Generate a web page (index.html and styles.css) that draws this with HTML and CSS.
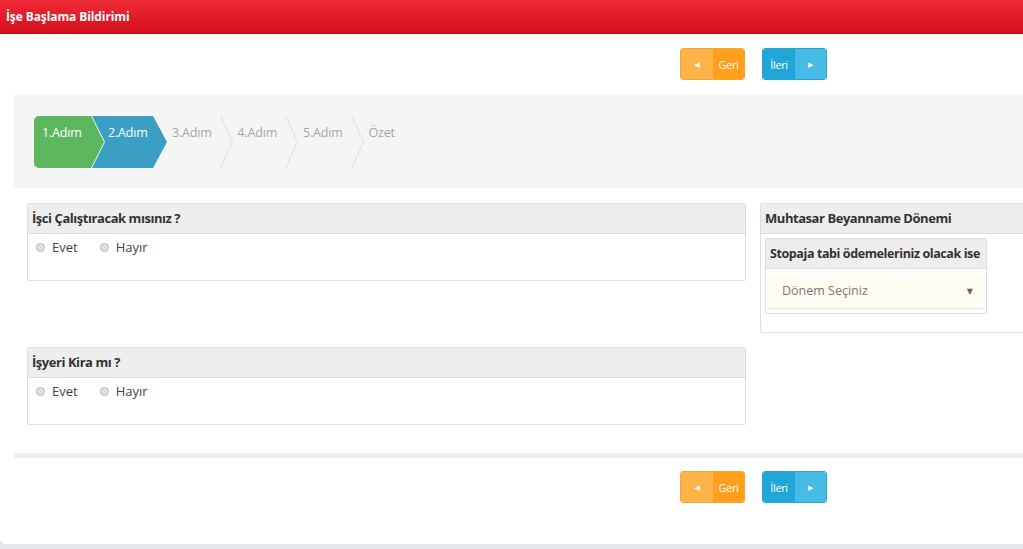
FILE: index.html
```html
<!DOCTYPE HTML>
<html>
<head>
    <meta charset="utf-8" />
    <title>İşe Başlama Bildirimi</title>
    <link rel="stylesheet" href="styles.css">
</head>
<body>

<div class="topbar">İşe Başlama Bildirimi</div>

<div class="page">
    <div class="nav-buttons">
        <a class="btn btn-back"><span class="btn-icon">&#9664;</span><span class="btn-text">Geri</span></a>
        <a class="btn btn-next"><span class="btn-text">İleri</span><span class="btn-icon">&#9654;</span></a>
    </div>

    <div class="wizard">
        <div class="step step-done">1.Adım</div>
        <div class="step step-active">2.Adım</div>
        <div class="step step-todo">3.Adım<svg class="sep" width="13" height="52" viewBox="0 0 13 52"><polyline points="0.5,0 12.5,26 0.5,52" /></svg></div>
        <div class="step step-todo">4.Adım<svg class="sep" width="13" height="52" viewBox="0 0 13 52"><polyline points="0.5,0 12.5,26 0.5,52" /></svg></div>
        <div class="step step-todo">5.Adım<svg class="sep" width="13" height="52" viewBox="0 0 13 52"><polyline points="0.5,0 12.5,26 0.5,52" /></svg></div>
        <div class="step step-todo">Özet</div>
    </div>

    <div class="columns">
        <div class="col-left">
            <div class="panel">
                <div class="panel-head">İşci Çalıştıracak mısınız ?</div>
                <div class="panel-body">
                    <label class="radio"><span class="dot"></span>Evet</label>
                    <label class="radio"><span class="dot"></span>Hayır</label>
                </div>
            </div>
            <div class="panel panel-second">
                <div class="panel-head">İşyeri Kira mı ?</div>
                <div class="panel-body">
                    <label class="radio"><span class="dot"></span>Evet</label>
                    <label class="radio"><span class="dot"></span>Hayır</label>
                </div>
            </div>
        </div>
        <div class="col-right">
            <div class="panel panel-side">
                <div class="panel-head">Muhtasar Beyanname Dönemi</div>
                <div class="panel-body side-body">
                    <div class="panel panel-inner">
                        <div class="panel-head">Stopaja tabi ödemeleriniz olacak ise</div>
                        <div class="select-wrap">
                            <div class="select">Dönem Seçiniz<span class="caret">&#9660;</span></div>
                        </div>
                    </div>
                </div>
            </div>
        </div>
    </div>

    <div class="divider"></div>

    <div class="nav-buttons nav-bottom">
        <a class="btn btn-back"><span class="btn-icon">&#9664;</span><span class="btn-text">Geri</span></a>
        <a class="btn btn-next"><span class="btn-text">İleri</span><span class="btn-icon">&#9654;</span></a>
    </div>
</div>

</body>
</html>
```

FILE: styles.css
```css
html, body {
    margin: 0;
    overflow: hidden;
}
body {
    font-family: "Open Sans", "DejaVu Sans", sans-serif;
    font-size: 12px;
    color: #333;
    background: #e3e7ea;
    height: 549px;
}
.topbar {
    height: 34px;
    line-height: 34px;
    padding-left: 6px;
    color: #fff;
    font-weight: bold;
    font-size: 12px;
    letter-spacing: -0.1px;
    background: linear-gradient(#ee2a36, #d4101c);
    border-bottom: 1px solid #b80d17;
    box-sizing: border-box;
}
.page {
    background: #fff;
    height: 510px;
    border-bottom-left-radius: 6px;
    padding-top: 14px;
    box-sizing: border-box;
    width: 1100px;
}
.nav-buttons {
    display: flex;
    gap: 17px;
    padding-left: 680px;
    height: 32px;
}
.btn {
    display: flex;
    width: 65px;
    height: 32px;
    border-radius: 3px;
    overflow: hidden;
    color: #fff;
    font-size: 11px;
    letter-spacing: -0.4px;
    box-sizing: border-box;
}
.btn span {
    display: flex;
    align-items: center;
    justify-content: center;
}
.btn-back {
    border: 1px solid #f5a53a;
}
.btn-back .btn-icon {
    width: 32px;
    background: #ffb449;
    font-size: 7px;
}
.btn-back .btn-text {
    flex: 1;
    background: #ff9f1c;
}
.btn-next {
    border: 1px solid #2aa3cf;
}
.btn-next .btn-text {
    width: 32px;
    background: #20a6d8;
}
.btn-next .btn-icon {
    flex: 1;
    background: #46bbe6;
    font-size: 7px;
}
.wizard {
    margin: 15px 0 0 14px;
    height: 93px;
    background: #f5f5f5;
    display: flex;
    align-items: flex-start;
    padding: 21px 0 0 20px;
    box-sizing: border-box;
}
.step {
    height: 52px;
    font-size: 12.5px;
    letter-spacing: -0.2px;
    line-height: 33px;
    display: flex;
    align-items: flex-start;
}
.step-done {
    width: 70px;
    padding-left: 8px;
    box-sizing: border-box;
    color: #fff;
    background: #5db75e;
    border-radius: 5px 0 0 5px;
    clip-path: polygon(0 0, 57px 0, 70px 50%, 57px 100%, 0 100%);
}
.step-active {
    width: 76px;
    margin-left: -13px;
    padding-left: 17px;
    box-sizing: border-box;
    color: #fff;
    background: #3b9fc5;
    clip-path: polygon(1px 0, 62px 0, 76px 50%, 62px 100%, 1px 100%, 14px 50%);
}
.step-todo {
    color: #a5a5a5;
    padding-left: 5px;
}
.step-todo .sep {
    margin-left: 8px;
}
.sep polyline {
    fill: none;
    stroke: #e0e0e0;
    stroke-width: 1;
}
.columns {
    display: flex;
    margin-top: 15px;
    padding-left: 27px;
    gap: 14px;
}
.col-left {
    width: 719px;
}
.col-right {
    width: 290px;
}
.panel {
    border: 1px solid #dddddd;
    border-radius: 2px;
    background: #fff;
}
.panel-head {
    height: 29px;
    line-height: 29px;
    background: #eeeeee;
    border-bottom: 1px solid #dddddd;
    padding-left: 4px;
    font-weight: bold;
    font-size: 13px;
    letter-spacing: -0.45px;
    color: #333;
    white-space: nowrap;
    overflow: hidden;
}
.panel-body {
    height: 46px;
    padding: 5px 0 0 8px;
    box-sizing: border-box;
    display: flex;
    gap: 22px;
}
.panel-second {
    margin-top: 66px;
}
.radio {
    display: flex;
    align-items: center;
    height: 16px;
    font-size: 13px;
    color: #444;
}
.dot {
    width: 7px;
    height: 7px;
    border-radius: 50%;
    border: 1px solid #b9b9b9;
    background: #e0e0e0;
    margin-right: 7px;
}
.side-body {
    height: auto;
    padding: 4px 0 18px 4px;
}
.panel-inner {
    width: 220px;
}
.panel-inner .panel-head {
    font-size: 12.5px;
    letter-spacing: -0.4px;
}
.select-wrap {
    padding: 5px 1px 4px 1px;
}
.select {
    height: 34px;
    background: #fffdf3;
    border-bottom: 1px solid #e4e4e4;
    color: #777;
    font-size: 12.5px;
    line-height: 34px;
    padding-left: 15px;
    position: relative;
}
.caret {
    position: absolute;
    right: 12px;
    top: 0;
    font-size: 8px;
    color: #666;
}
.divider {
    margin: 28px 0 0 14px;
    height: 5px;
    background: #eeeeee;
}
.nav-bottom {
    margin-top: 13px;
}
```
